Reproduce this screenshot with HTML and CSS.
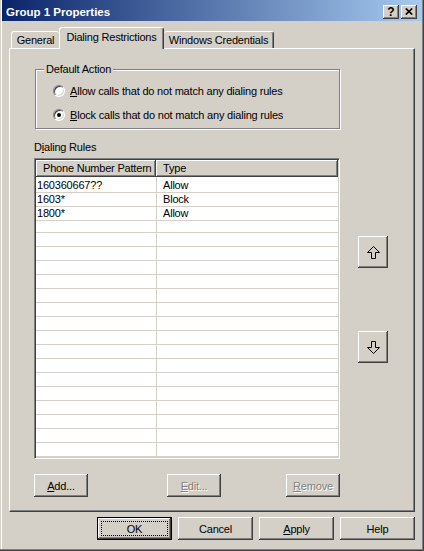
FILE: index.html
```html
<!DOCTYPE html>
<html>
<head>
<meta charset="utf-8">
<title>Group 1 Properties</title>
<link rel="stylesheet" href="styles.css">
</head>
<body>
<div class="window">
  <div class="titlebar">
    <span class="title">Group 1 Properties</span>
    <div class="caption-btns">
      <span class="cbtn cbtn-help">?</span>
      <span class="cbtn"><svg width="8" height="7" viewBox="0 0 8 7"><path d="M0.8 0.5 L7.2 6.5 M7.2 0.5 L0.8 6.5" stroke="#000" stroke-width="1.7" fill="none"/></svg></span>
    </div>
  </div>
  <div class="content">
    <div class="tabs">
      <div class="tab tab-general">General</div>
      <div class="tab tab-active">Dialing Restrictions</div>
      <div class="tab tab-cred">Windows Credentials</div>
    </div>
    <div class="panel">
      <div class="main">
        <fieldset class="group">
          <legend>Default Action</legend>
          <div class="radios">
            <div class="radio-row"><span class="radio"></span><span><u>A</u>llow calls that do not match any dialing rules</span></div>
            <div class="radio-row"><span class="radio checked"></span><span><u>B</u>lock calls that do not match any dialing rules</span></div>
          </div>
        </fieldset>
        <div class="list-label">D<u>i</u>aling Rules</div>
        <div class="list">
          <div class="lhead"><div class="hcell">Phone Number Pattern</div><div class="hcell">Type</div></div>
          <div class="row"><div class="cell">160360667??</div><div class="cell">Allow</div></div>
          <div class="row"><div class="cell">1603*</div><div class="cell">Block</div></div>
          <div class="row"><div class="cell">1800*</div><div class="cell">Allow</div></div>
          <div class="row"><div class="cell"></div><div class="cell"></div></div>
          <div class="row"><div class="cell"></div><div class="cell"></div></div>
          <div class="row"><div class="cell"></div><div class="cell"></div></div>
          <div class="row"><div class="cell"></div><div class="cell"></div></div>
          <div class="row"><div class="cell"></div><div class="cell"></div></div>
          <div class="row"><div class="cell"></div><div class="cell"></div></div>
          <div class="row"><div class="cell"></div><div class="cell"></div></div>
          <div class="row"><div class="cell"></div><div class="cell"></div></div>
          <div class="row"><div class="cell"></div><div class="cell"></div></div>
          <div class="row"><div class="cell"></div><div class="cell"></div></div>
          <div class="row"><div class="cell"></div><div class="cell"></div></div>
          <div class="row"><div class="cell"></div><div class="cell"></div></div>
          <div class="row"><div class="cell"></div><div class="cell"></div></div>
          <div class="row"><div class="cell"></div><div class="cell"></div></div>
          <div class="row"><div class="cell"></div><div class="cell"></div></div>
          <div class="row"><div class="cell"></div><div class="cell"></div></div>
          <div class="row"><div class="cell"></div><div class="cell"></div></div>
        </div>
        <div class="list-btns">
          <button class="btn btn-small"><u>A</u>dd...</button>
          <button class="btn btn-small btn-disabled b-edit"><u>E</u>dit...</button>
          <button class="btn btn-small btn-disabled b-remove"><u>R</u>emove</button>
        </div>
      </div>
      <div class="side">
        <button class="btn arrow"><svg width="13" height="13" viewBox="0 0 13 13"><path d="M6.5 0.5 L12.5 6.5 L8.5 6.5 L8.5 12.5 L4.5 12.5 L4.5 6.5 L0.5 6.5 Z" fill="none" stroke="#000"/></svg></button>
        <button class="btn arrow arrow-down"><svg width="13" height="13" viewBox="0 0 13 13"><path d="M6.5 12.5 L12.5 6.5 L8.5 6.5 L8.5 0.5 L4.5 0.5 L4.5 6.5 L0.5 6.5 Z" fill="none" stroke="#000"/></svg></button>
      </div>
    </div>
    <div class="dialog-btns">
      <button class="btn btn-dlg btn-default"><span class="focus">OK</span></button>
      <button class="btn btn-dlg">Cancel</button>
      <button class="btn btn-dlg"><u>A</u>pply</button>
      <button class="btn btn-dlg">Help</button>
    </div>
  </div>
</div>
</body>
</html>
```

FILE: styles.css
```css
* { box-sizing: border-box; }
html, body { margin: 0; padding: 0; }
body {
  background: #d4d0c8;
  font-family: "Liberation Sans", Arial, sans-serif;
  font-size: 11px;
  letter-spacing: -0.2px;
  color: #000;
}
u { text-decoration: underline; }

.window {
  width: 424px;
  height: 551px;
  padding: 0 2px 2px;
  background: #d4d0c8;
  box-shadow: inset -1px -1px 0 #404040, inset -2px -2px 0 #808080, inset 1px 0 0 #d4d0c8, inset 2px 0 0 #fff;
  display: flex;
  flex-direction: column;
}

.titlebar {
  height: 21px;
  flex: none;
  display: flex;
  align-items: center;
  justify-content: space-between;
  padding: 0 5px 0 4px;
  background: linear-gradient(to right, #0a246a, #a6caf0);
}
.title {
  color: #fff;
  font-weight: bold;
  font-size: 11.5px;
  letter-spacing: 0;
  padding-top: 2px;
}
.caption-btns {
  display: flex;
  gap: 2px;
  margin-top: 3px;
}
.cbtn {
  width: 16px;
  height: 14px;
  background: #d4d0c8;
  box-shadow: inset -1px -1px 0 #404040, inset 1px 1px 0 #fff, inset -2px -2px 0 #808080;
  display: flex;
  align-items: center;
  justify-content: center;
  padding-bottom: 1px;
}
.cbtn-help {
  font-weight: bold;
  font-size: 12px;
  letter-spacing: 0;
  line-height: 12px;
}

.content {
  flex: 1;
  display: flex;
  flex-direction: column;
  padding: 6px 7px 0;
}

.tabs {
  display: flex;
  align-items: flex-end;
  height: 21px;
  padding-left: 2px;
}
.tab {
  height: 17px;
  padding-top: 2px;
  line-height: 13px;
  text-align: center;
  white-space: nowrap;
  background: #d4d0c8;
  border: 1px solid #fff;
  border-bottom: none;
  border-right-color: #404040;
  box-shadow: inset -1px 0 0 #808080;
  border-radius: 3px 3px 0 0;
}
.tab-general { width: 48px; border-right: none; box-shadow: none; }
.tab-active {
  width: 105px;
  height: 22px;
  padding-top: 3px;
  margin-bottom: -1px;
  position: relative;
  z-index: 1;
}
.tab-cred { width: 110px; border-left: none; }

.panel {
  height: 464px;
  flex: none;
  display: flex;
  padding: 14px 0 0 24px;
  border: 1px solid;
  border-color: #fff #404040 #404040 #fff;
  box-shadow: inset -1px -1px 0 #808080;
}
.main {
  width: 306px;
  display: flex;
  flex-direction: column;
}

.group {
  margin: 0 0 0 1px;
  padding: 0 0 1px;
  width: 305px;
  min-width: 0;
  border: 1px solid #808080;
  box-shadow: 1px 1px 0 #fff, inset 1px 1px 0 #fff;
}
.group legend {
  margin-left: 8px;
  padding: 0 2px;
  line-height: 13px;
  background: #d4d0c8;
}
.radios {
  padding: 3px 0 0 17px;
}
.radio-row {
  height: 24px;
  display: flex;
  align-items: center;
  gap: 5px;
  white-space: nowrap;
}
.radio {
  width: 12px;
  height: 12px;
  flex: none;
  border-radius: 50%;
  background: #fff;
  border: 1px solid;
  border-color: #808080 #fff #fff #808080;
  box-shadow: inset 1px 1px 0 #404040, inset -1px -1px 0 #d4d0c8;
  display: flex;
  align-items: center;
  justify-content: center;
}
.radio.checked::after {
  content: "";
  width: 4px;
  height: 4px;
  border-radius: 50%;
  background: #000;
}

.list-label {
  margin-top: 12px;
  line-height: 13px;
}

.list {
  margin-top: 4px;
  height: 301px;
  padding: 1px;
  background: #fff;
  border: 1px solid;
  border-color: #808080 #fff #fff #808080;
  box-shadow: inset 1px 1px 0 #404040, inset -1px -1px 0 #d4d0c8;
  overflow: hidden;
}
.lhead {
  display: grid;
  grid-template-columns: 120px 1fr;
  height: 17px;
  background: #d4d0c8;
}
.hcell {
  padding-left: 7px;
  line-height: 17px;
  white-space: nowrap;
  box-shadow: inset -1px -1px 0 #404040, inset 1px 1px 0 #fff, inset -2px -2px 0 #808080;
}
.row {
  display: grid;
  grid-template-columns: 121px 1fr;
  height: 14px;
}
.cell {
  border-bottom: 1px solid #d4d0c8;
  padding: 2px 0 0 1px;
  line-height: 13px;
  white-space: nowrap;
}
.cell:first-child { border-right: 1px solid #d4d0c8; }
.cell + .cell { padding-left: 6px; }

.btn {
  font: inherit;
  letter-spacing: inherit;
  color: #000;
  background: #d4d0c8;
  border: none;
  padding: 0;
  margin: 0;
  box-shadow: inset -1px -1px 0 #404040, inset 1px 1px 0 #fff, inset -2px -2px 0 #808080;
  display: flex;
  align-items: center;
  justify-content: center;
}
.btn-disabled {
  color: #808080;
  text-shadow: 1px 1px 0 #fff;
}

.list-btns {
  display: flex;
  margin-top: 15px;
}
.btn-small { width: 54px; height: 23px; }
.b-edit { margin-left: 79px; }
.b-remove { margin-left: auto; }

.side {
  display: flex;
  flex-direction: column;
  margin-left: 18px;
  padding-top: 173px;
  gap: 63px;
}
.arrow { width: 30px; height: 32px; }

.dialog-btns {
  display: flex;
  justify-content: flex-end;
  gap: 6px;
  margin-top: 5px;
}
.btn-dlg { width: 75px; height: 23px; }
.btn-default {
  border: 1px solid #000;
  padding: 3px;
}
.focus {
  flex: 1;
  align-self: stretch;
  border: 1px dotted #000;
  display: flex;
  align-items: center;
  justify-content: center;
}
```
